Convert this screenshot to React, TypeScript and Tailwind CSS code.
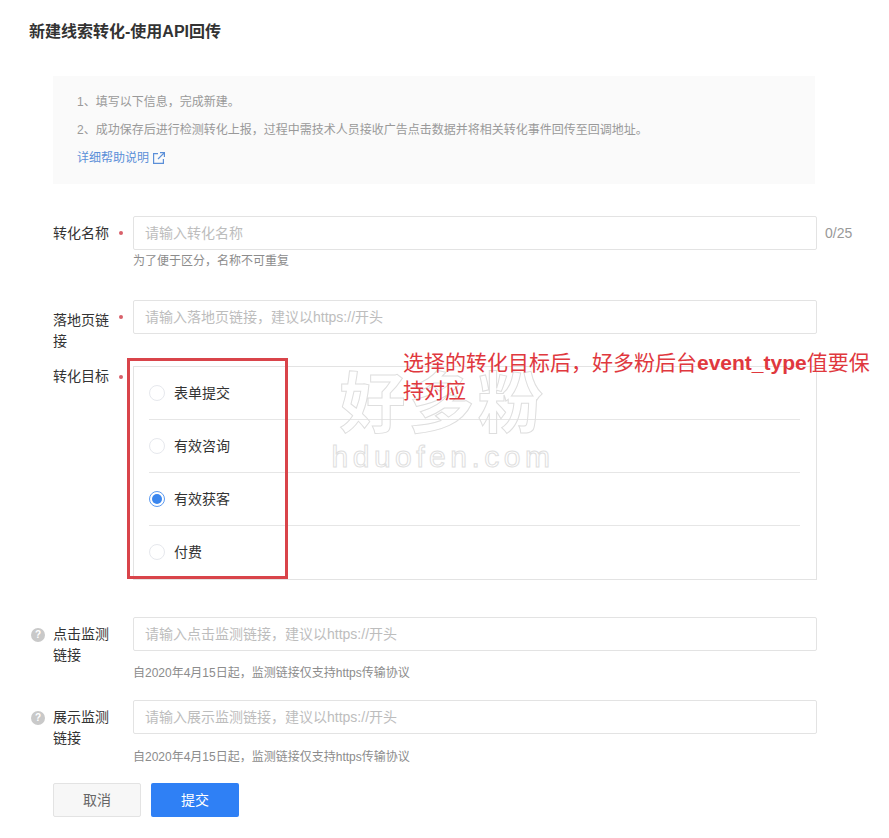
import type { ReactNode } from 'react';

const goals = ['表单提交', '有效咨询', '有效获客', '付费'];

function Label({ text, required, help, dotClass = 'mt-[9px]' }: { text: string; required?: boolean; help?: boolean; dotClass?: string }) {
  return (
    <div className="relative flex w-20 shrink-0 text-sm leading-[21px] text-[#333]">
      {help && (
        <span className="absolute top-[4px] -left-[22px] flex h-[14px] w-[14px] items-center justify-center rounded-full bg-[#c9c9c9] text-[10px] leading-none font-bold text-white">
          ?
        </span>
      )}
      <span className="w-[58px]">{text}</span>
      {required && <span className={`ml-[8px] h-[4px] w-[4px] rounded-full bg-[#d9606a] ${dotClass}`} />}
    </div>
  );
}

function TextInput({ placeholder }: { placeholder: string }) {
  return (
    <div className="flex h-[34px] w-[684px] items-center rounded-[2px] border border-[#e3e3e3] bg-white pl-[11px] text-sm text-[#bdbdbd]">
      {placeholder}
    </div>
  );
}

function Hint({ children, className }: { children: ReactNode; className: string }) {
  return <div className={`text-xs leading-[18px] text-[#8c8c8c] ${className}`}>{children}</div>;
}

function Radio({ checked }: { checked?: boolean }) {
  return (
    <span
      className={`flex h-4 w-4 items-center justify-center rounded-full border bg-white ${
        checked ? 'border-[#5d9bf0]' : 'border-[#e6e8ed]'
      }`}
    >
      {checked && <span className="h-[10px] w-[10px] rounded-full bg-[#3a86ee]" />}
    </span>
  );
}

function LinkIcon() {
  return (
    <svg viewBox="0 0 12 12" className="h-3 w-3" fill="none" stroke="currentColor" strokeWidth="1.2">
      <path d="M5 1.6H.6v9.8h9.8V7" />
      <path d="M7 .6h4.4V5M11.2.8 5 7" />
    </svg>
  );
}

export default function App() {
  return (
    <div className="relative h-[838px] w-[889px] overflow-hidden bg-white font-['Liberation_Sans','Noto_Sans_CJK_SC',sans-serif]">
      <div className="pt-[21px] pl-[29px] text-base leading-[22px] font-bold text-[#333]">新建线索转化-使用API回传</div>

      <div className="mt-[33px] ml-[53px] w-[762px] bg-[#fafafa] px-6 py-3 text-xs leading-7 text-[#999]">
        <div>1、填写以下信息，完成新建。</div>
        <div>2、成功保存后进行检测转化上报，过程中需技术人员接收广告点击数据并将相关转化事件回传至回调地址。</div>
        <div className="flex items-center gap-[4px] text-[#5b8fd8]">
          详细帮助说明
          <LinkIcon />
        </div>
      </div>

      <div className="mt-[32px] ml-[53px]">
        <div className="flex items-start">
          <div className="pt-[7px]">
            <Label text="转化名称" required dotClass="mt-[8px]" />
          </div>
          <div>
            <TextInput placeholder="请输入转化名称" />
            <Hint className="mt-[2px]">为了便于区分，名称不可重复</Hint>
          </div>
          <span className="ml-2 pt-[8px] text-sm leading-[18px] text-[#999]">0/25</span>
        </div>

        <div className="mt-[30px] flex items-start">
          <div className="pt-[10px]">
            <Label text="落地页链接" required dotClass="mt-[5px]" />
          </div>
          <TextInput placeholder="请输入落地页链接，建议以https://开头" />
        </div>

        <div className="mt-[14px] flex items-start">
          <Label text="转化目标" required />
          <div className="h-[214px] w-[684px] border border-[#e3e3e3] pr-[16px] pl-[15px]">
            {goals.map((goal, i) => (
              <div
                key={goal}
                className={`flex items-center gap-[9px] text-sm text-[#333] ${
                  i < goals.length - 1 ? 'h-[53px] border-b border-[#e6e6e6]' : 'h-[52px]'
                }`}
              >
                <Radio checked={i === 2} />
                {goal}
              </div>
            ))}
          </div>
        </div>

        <div className="mt-[37px] flex items-start">
          <div className="pt-[7px]">
            <Label text="点击监测链接" help />
          </div>
          <div>
            <TextInput placeholder="请输入点击监测链接，建议以https://开头" />
            <Hint className="mt-[13px]">自2020年4月15日起，监测链接仅支持https传输协议</Hint>
          </div>
        </div>

        <div className="mt-[18px] flex items-start">
          <div className="pt-[7px]">
            <Label text="展示监测链接" help />
          </div>
          <div>
            <TextInput placeholder="请输入展示监测链接，建议以https://开头" />
            <Hint className="mt-[14px]">自2020年4月15日起，监测链接仅支持https传输协议</Hint>
          </div>
        </div>

        <div className="mt-[17px] flex gap-[10px] text-sm">
          <div className="flex h-[34px] w-[88px] items-center justify-center rounded-[2px] border border-[#e3e3e3] bg-[#f7f7f7] text-[#666]">
            取消
          </div>
          <div className="flex h-[34px] w-[88px] items-center justify-center rounded-[2px] bg-[#2f80f5] text-white">
            提交
          </div>
        </div>
      </div>

      {/* watermark */}
      <div className="pointer-events-none absolute top-[369px] left-[330px] w-[226px] text-center text-transparent [-webkit-text-stroke:1px_#dedede]">
        <div className="text-[66px] leading-[71px] font-bold tracking-[3px] whitespace-nowrap">好多粉</div>
        <div className="text-[30px] leading-[34px] tracking-[4.5px] whitespace-nowrap">hduofen.com</div>
      </div>

      {/* annotation */}
      <div className="absolute top-[358px] left-[127px] h-[221px] w-[161px] border-[3px] border-[#d9444a]" />
      <div className="absolute top-[349px] left-[403px] w-[470px] text-[21px] leading-[28px] text-[#e0383e]">
        选择的转化目标后，好多粉后台<span className="font-semibold">event_type</span>值要保持对应
      </div>
    </div>
  );
}
